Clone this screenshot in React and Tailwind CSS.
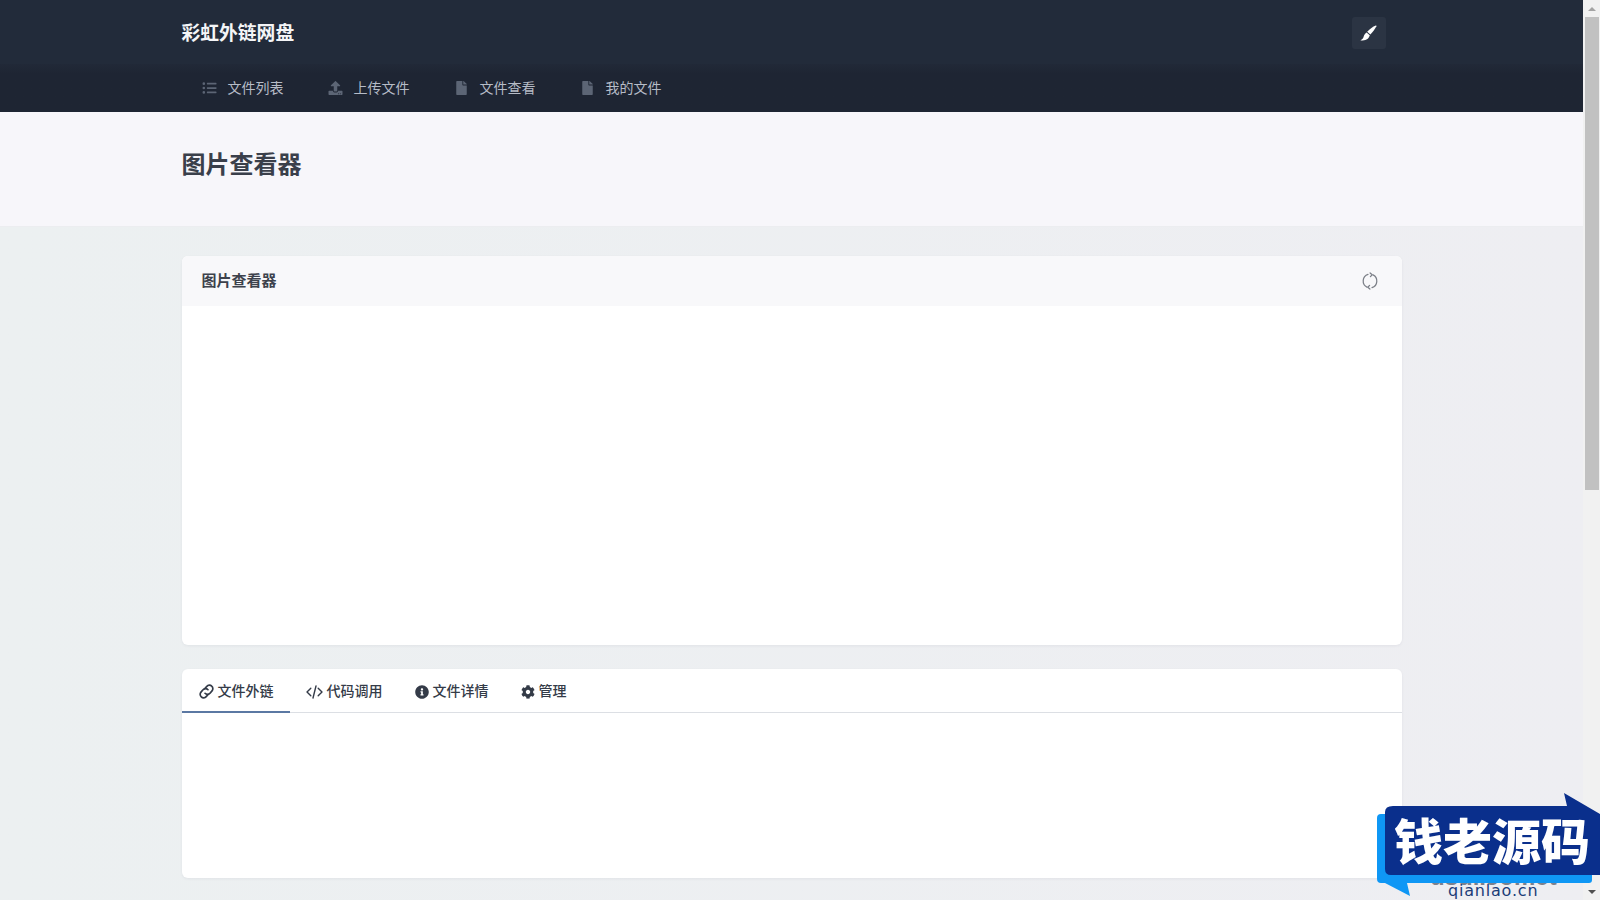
import React from "react";
import { FaListUl, FaUpload, FaFile, FaInfoCircle, FaCog } from "react-icons/fa";

const cjk = "font-['Liberation_Sans','Noto_Sans_CJK_SC',sans-serif]";

function NavItem({ icon: Icon, label }) {
  return (
    <div className="flex items-center gap-[11px] pl-[20px] w-[126px]">
      <Icon className="text-[#5c6575] text-[14px] w-[15px] shrink-0" />
      <span className="text-[14px] text-[#b6bcc7]">{label}</span>
    </div>
  );
}

function LinkIcon() {
  return (
    <svg width="17" height="15" viewBox="0 0 16 14" fill="none" stroke="#343b48" strokeWidth="1.6" strokeLinecap="round" className="shrink-0 -mr-[1px]">
      <path d="M6.2 4.4 8.3 2.2A3.1 3.1 0 0 1 12.9 2a3.1 3.1 0 0 1 .3 4.4L11.3 8.6A3.1 3.1 0 0 1 6.6 8.7" />
      <path d="M9.8 9.6 7.7 11.8A3.1 3.1 0 0 1 3.1 12a3.1 3.1 0 0 1-.3-4.4L4.7 5.4A3.1 3.1 0 0 1 9.4 5.3" />
    </svg>
  );
}

function CodeIcon() {
  return (
    <svg width="17" height="14" viewBox="0 0 17 14" fill="none" stroke="#343b48" strokeWidth="1.4" strokeLinecap="round" strokeLinejoin="round">
      <path d="M4.8 3.2 1 7l3.8 3.8" />
      <path d="M12.2 3.2 16 7l-3.8 3.8" />
      <path d="M10 1 7 13" />
    </svg>
  );
}

function BrushIcon() {
  return (
    <svg width="17" height="16" viewBox="0 0 17 16" fill="#ffffff">
      <path d="M15.8 0.6C16.3 0.4 16.6 0.8 16.4 1.3 15 4 12.8 7 10.4 9.6L7.2 6.8C9.8 4.2 13 1.8 15.8 0.6Z" />
      <path d="M6.6 7.4 9.8 10.2C9 13 6.8 15.4 2.6 15.4H0.4C2.4 14.4 3.2 13.3 3.7 11.6 4.2 9.6 5.2 8.3 6.6 7.4Z" />
    </svg>
  );
}

function Tab({ icon, label, active }) {
  return (
    <div className={`flex items-center gap-[4px] px-[16px] pt-[3px] h-[44px] -mb-px border-b-2 ${active ? "border-[#5b78a3]" : "border-transparent"}`}>
      {icon}
      <span className="text-[14px] font-medium text-[#343b48]">{label}</span>
    </div>
  );
}

function RefreshIcon() {
  return (
    <svg width="18" height="18" viewBox="0 0 17 17" fill="none" stroke="#7d8189" strokeWidth="1.2" strokeLinecap="round" strokeLinejoin="round">
      <path d="M6.6 2.2A6.6 6.6 0 0 0 5.6 14.3" />
      <path d="M10.4 14.8A6.6 6.6 0 0 0 11.4 2.7" />
      <path d="M8.6 0.9 10.6 2.6 8.9 4.4" />
      <path d="M8.4 16.1 6.4 14.4 8.1 12.6" />
    </svg>
  );
}

function Watermark() {
  return (
    <div className="absolute left-[1377px] top-[790px] w-[223px] h-[110px] overflow-hidden pointer-events-none">
      <div className="absolute left-[53px] top-[75px] text-[24px] leading-[24px] font-bold text-[#7c818c] font-['Liberation_Sans',sans-serif] whitespace-nowrap">usdl.Jomet</div>
      <svg width="223" height="110" viewBox="0 0 223 110" className="absolute inset-0">
        <path d="M4 24H215V90Q215 93 212 93H30L33 106L8 93H4Q0 93 0 89V28Q0 24 4 24Z" fill="#0f97f5" />
        <path d="M16 16H190L187 3L223 24V85H14Q8 85 8 79V22Q8 16 16 16Z" fill="#0a2f8c" />
      </svg>
      <div className="absolute left-[17px] top-[19px] text-[49px] leading-[60px] font-black text-white whitespace-nowrap font-['Noto_Sans_CJK_SC',sans-serif]">钱老源码</div>
      <div className="absolute left-[71px] top-[92px] text-[16px] leading-[18px] tracking-[0.8px] text-[#1c3d78] whitespace-nowrap font-['DejaVu_Sans',sans-serif]">qianlao.cn</div>
    </div>
  );
}

function Scrollbar() {
  return (
    <div className="w-[17px] shrink-0 h-full bg-[#f1f1f1] flex flex-col items-center">
      <div className="h-[17px] w-full flex items-center justify-center">
        <div className="w-0 h-0 border-l-[4px] border-r-[4px] border-b-[4px] border-l-transparent border-r-transparent border-b-[#a3a3a3]"></div>
      </div>
      <div className="h-[473px] w-[14px] bg-[#c1c1c1]"></div>
      <div className="flex-1"></div>
      <div className="h-[17px] w-full flex items-center justify-center">
        <div className="w-0 h-0 border-l-[4px] border-r-[4px] border-t-[4px] border-l-transparent border-r-transparent border-t-[#505050]"></div>
      </div>
    </div>
  );
}

export default function App() {
  return (
    <div className={`relative flex w-full h-[900px] overflow-hidden bg-gradient-to-r from-[#ecf0f1] to-[#eeeef2] ${cjk}`}>
      <div className="flex-1 min-w-0 flex flex-col">
        <header className="h-[64px] bg-[#222b3a]">
          <div className="mx-auto w-[1220px] h-full pt-[2px] flex items-center justify-between pr-[16px]">
            <span className="text-[18.8px] pt-[2px] font-bold text-[#f4f5f7]">彩虹外链网盘</span>
            <div className="w-[34px] h-[32px] rounded-[3px] bg-[#2b3443] flex items-center justify-center">
              <BrushIcon />
            </div>
          </div>
        </header>
        <nav className="h-[48px] bg-gradient-to-b from-[#212938] to-[#1e2533] to-20%">
          <div className="mx-auto w-[1220px] h-full flex items-center">
            <NavItem icon={FaListUl} label="文件列表" />
            <NavItem icon={FaUpload} label="上传文件" />
            <NavItem icon={FaFile} label="文件查看" />
            <NavItem icon={FaFile} label="我的文件" />
          </div>
        </nav>
        <section className="h-[115px] bg-[#f7f6fa] border-b border-[#ecedf0]">
          <div className="mx-auto w-[1220px] pt-[36px]">
            <h1 className="text-[24px] leading-[34px] font-bold text-[#3a3f4a]">图片查看器</h1>
          </div>
        </section>
        <main className="mx-auto w-[1220px] pt-[29px] flex flex-col gap-[24px]">
          <div className="h-[389px] bg-white rounded-[6px] shadow-[0_1px_3px_rgba(30,40,60,0.06)] overflow-hidden">
            <div className="h-[50px] bg-[#f8f8fa] flex items-center justify-between pl-[20px] pr-[23px]">
              <span className="text-[15px] pt-[1px] font-bold text-[#3d424c]">图片查看器</span>
              <RefreshIcon />
            </div>
          </div>
          <div className="h-[209px] bg-white rounded-[6px] shadow-[0_1px_3px_rgba(30,40,60,0.06)] overflow-hidden">
            <div className="h-[44px] flex border-b border-[#dcdfe4]">
              <Tab icon={<LinkIcon />} label="文件外链" active />
              <Tab icon={<CodeIcon />} label="代码调用" />
              <Tab icon={<FaInfoCircle className="text-[#343b48] text-[14px] shrink-0" />} label="文件详情" />
              <Tab icon={<FaCog className="text-[#343b48] text-[14px] shrink-0" />} label="管理" />
            </div>
          </div>
        </main>
      </div>
      <Scrollbar />
      <Watermark />
    </div>
  );
}
